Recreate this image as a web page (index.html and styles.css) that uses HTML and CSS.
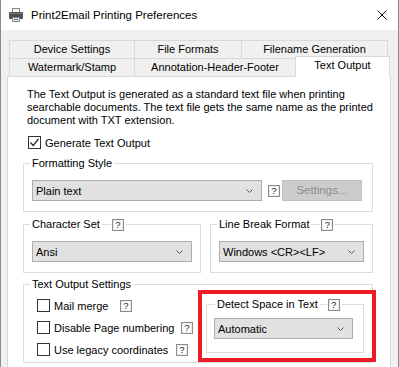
FILE: index.html
```html
<!DOCTYPE html>
<html lang="en">
<head>
<meta charset="UTF-8">
<title>Print2Email Printing Preferences</title>
<link rel="stylesheet" href="styles.css">
</head>
<body>
<div class="window">
<div class="titlebar">
<svg class="app-icon" viewBox="0 0 16 16">
<rect x="4.5" y="1.5" width="7" height="4" fill="#f4f4f4" stroke="#8a8a8a"/>
<rect x="1" y="5" width="14" height="7" rx="1" fill="#505050"/>
<rect x="2" y="6" width="12" height="1" fill="#7d7d7d"/>
<rect x="4.5" y="10.5" width="7" height="4" fill="#e6e6e6" stroke="#8a8a8a"/>
<rect x="6" y="12" width="4" height="1" fill="#2f8ad8"/>
</svg>
<span class="title">Print2Email Printing Preferences</span>
<svg class="close" viewBox="0 0 10 10">
<path d="M0.5 0.5 L9.5 9.5 M9.5 0.5 L0.5 9.5" stroke="#111" stroke-width="1" fill="none"/>
</svg>
</div>
<div class="client">
<div class="tabs">
<div class="tab-row">
<div class="tab tab-device">Device Settings</div>
<div class="tab tab-formats">File Formats</div>
<div class="tab tab-filename">Filename Generation</div>
</div>
<div class="tab-row">
<div class="tab tab-device">Watermark/Stamp</div>
<div class="tab tab-annot">Annotation-Header-Footer</div>
<div class="tab tab-active">Text Output</div>
</div>
</div>
<div class="panel">
<p class="intro">The Text Output is generated as a standard text file when printing<br>searchable documents. The text file gets the same name as the printed<br>document with TXT extension.</p>
<div class="check-row top-check">
<span class="box"><svg viewBox="0 0 11 11"><polyline points="1.5,5.5 4.2,8.5 9.5,2" fill="none" stroke="#222" stroke-width="1.2"/></svg></span>
<span class="check-label">Generate Text Output</span>
</div>

<fieldset class="group format-group">
<legend>Formatting Style</legend>
<div class="format-line">
<div class="combo format-combo">
<span>Plain text</span>
<svg class="chev" viewBox="0 0 7 4"><polyline points="0.5,0.5 3.5,3.5 6.5,0.5" fill="none" stroke="#555" stroke-width="1"/></svg>
</div>
<span class="help help-format">?</span>
<span class="btn-disabled">Settings...</span>
</div>
</fieldset>

<div class="pair">
<fieldset class="group charset-group">
<legend><span>Character Set</span><span class="leg-line"></span><span class="help">?</span></legend>
<div class="combo">
<span>Ansi</span>
<svg class="chev" viewBox="0 0 7 4"><polyline points="0.5,0.5 3.5,3.5 6.5,0.5" fill="none" stroke="#555" stroke-width="1"/></svg>
</div>
</fieldset>
<fieldset class="group linebreak-group">
<legend><span>Line Break Format</span><span class="leg-line"></span><span class="help">?</span></legend>
<div class="combo">
<span>Windows &lt;CR&gt;&lt;LF&gt;</span>
<svg class="chev" viewBox="0 0 7 4"><polyline points="0.5,0.5 3.5,3.5 6.5,0.5" fill="none" stroke="#555" stroke-width="1"/></svg>
</div>
</fieldset>
</div>

<fieldset class="group settings-group">
<legend>Text Output Settings</legend>
<div class="settings-body">
<div class="opts">
<div class="check-row">
<span class="box"></span>
<span class="check-label opt-mail">Mail merge</span>
<span class="help">?</span>
</div>
<div class="check-row">
<span class="box"></span>
<span class="check-label opt-page">Disable Page numbering</span>
<span class="help">?</span>
</div>
<div class="check-row">
<span class="box"></span>
<span class="check-label opt-legacy">Use legacy coordinates</span>
<span class="help">?</span>
</div>
</div>
<fieldset class="group detect-group">
<legend><span>Detect Space in Text</span><span class="leg-line short"></span><span class="help">?</span></legend>
<div class="combo">
<span>Automatic</span>
<svg class="chev" viewBox="0 0 7 4"><polyline points="0.5,0.5 3.5,3.5 6.5,0.5" fill="none" stroke="#555" stroke-width="1"/></svg>
</div>
</fieldset>
</div>
</fieldset>
</div>
</div>
<div class="highlight"></div>
</div>
</body>
</html>
```

FILE: styles.css
```css
html, body { margin: 0; padding: 0; }
body { width: 399px; height: 367px; overflow: hidden; background: #f0f0f0; color: #000; font-family: "Liberation Sans", Arial, sans-serif; font-size: 11px; }

.window { position: relative; box-sizing: border-box; width: 399px; height: 367px; border-left: 1px solid #8a8a8a; border-right: 1px solid #8a8a8a; background: #f0f0f0; overflow: hidden; }
.titlebar { display: flex; align-items: center; height: 30px; background: #fff; }
.app-icon { width: 16px; height: 16px; margin-left: 7px; }
.title { margin-left: 7px; font-size: 11.5px; color: #000; }
.close { width: 10px; height: 10px; margin-left: auto; margin-right: 11px; }

.client { padding: 10px 0 0 6px; }
.tabs { margin-left: 2px; }
.tab-row { display: flex; height: 18px; }
.tab { box-sizing: border-box; height: 18px; margin-left: -1px; border: 1px solid #d9d9d9; border-bottom: none; background: #f0f0f0; text-align: center; line-height: 17px; white-space: nowrap; }
.tab:first-child { margin-left: 0; }
.tab-device { width: 126px; }
.tab-formats { width: 108px; }
.tab-filename { width: 147px; }
.tab-annot { width: 162px; }
.tab-active { position: relative; z-index: 1; width: 95px; height: 21px; margin-top: -2px; background: #fff; line-height: 17px; }

.panel { box-sizing: border-box; width: 384px; height: 300px; padding: 11px 0 0 15px; background: #fff; border: 1px solid #d9d9d9; }
.intro { margin: 0 0 0 4px; line-height: 13px; white-space: nowrap; }

.check-row { display: flex; align-items: center; height: 13px; }
.top-check { margin: 9px 0 0 5px; }
.box { display: block; box-sizing: border-box; width: 13px; height: 13px; border: 1px solid #333; background: #fff; }
.box svg { display: block; width: 11px; height: 11px; }
.check-label { margin-left: 4px; white-space: nowrap; }

.group { box-sizing: border-box; min-width: 0; margin: 0; padding: 10px 8px 10px; border: 1px solid #dcdcdc; }
.group legend { display: flex; align-items: center; height: 13px; margin-left: -2px; padding: 0 2px; line-height: 13px; }
.leg-line { display: block; width: 9px; height: 1px; margin: 0 1px 0 2px; background: #dcdcdc; }
.leg-line.short { width: 7px; }

.help { display: block; box-sizing: border-box; width: 12px; height: 12px; border: 1px solid #8c8c8c; background: #fff; box-shadow: inset 0 0 0 1px #ececec; font-size: 9.5px; line-height: 10px; text-align: center; color: #111; }

.combo { display: flex; align-items: center; box-sizing: border-box; height: 21px; padding-left: 3px; border: 1px solid #adadad; background: #e1e1e1; white-space: nowrap; }
.chev { width: 7px; height: 4px; margin-left: auto; margin-right: 8px; }

.format-group { width: 350px; margin-top: 8px; }
.format-line { display: flex; align-items: center; }
.format-combo { width: 230px; }
.help-format { margin-left: 6px; }
.btn-disabled { box-sizing: border-box; width: 80px; height: 21px; margin-left: 2px; border: 1px solid #bfbfbf; background: #cccccc; color: #8c8c8c; font-size: 11.5px; text-align: center; line-height: 19px; }

.pair { display: flex; gap: 9px; margin-top: 6px; }
.charset-group { width: 178px; }
.linebreak-group { width: 163px; }

.settings-group { width: 350px; margin-top: 5px; padding: 0 8px 6px; }
.settings-body { display: flex; align-items: flex-start; }
.opts { display: flex; flex-direction: column; gap: 9px; margin-left: 5px; padding-top: 8px; }
.opt-mail { width: 66px; }
.opt-page { width: 127px; }
.opt-legacy { width: 122px; }
.detect-group { width: 158px; margin-left: auto; margin-top: 7px; padding: 7px 10px 13px 7px; }
.detect-group legend { margin-left: 1px; }

.highlight { position: absolute; left: 197px; top: 290px; box-sizing: border-box; width: 178px; height: 72px; border: 4px solid #ed1c24; }
```
